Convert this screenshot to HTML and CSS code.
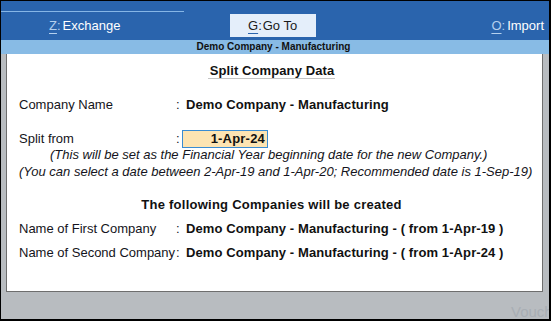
FILE: index.html
```html
<!DOCTYPE html>
<html>
<head>
<meta charset="utf-8">
<link rel="stylesheet" href="styles.css">
</head>
<body>
<div class="screen">
  <header class="topbar">
    <div class="topline"></div>
    <nav class="menu">
      <div class="menu-cell menu-left"><span class="key">Z</span><span class="colon">:</span><span class="label">Exchange</span></div>
      <div class="menu-cell menu-mid"><span class="btn"><span class="key-dark">G</span>:<span class="label-tight">Go To</span></span></div>
      <div class="menu-cell menu-right"><span class="key">O</span><span class="colon">:</span><span class="label">Import</span></div>
    </nav>
  </header>
  <div class="subheader">Demo Company - Manufacturing</div>
  <main class="workspace">
    <section class="dialog">
      <div class="title"><span class="title-text">Split Company Data</span></div>
      <div class="field row-company">
        <span class="f-label">Company Name</span>
        <span class="f-colon">:</span>
        <span class="f-value">Demo Company - Manufacturing</span>
      </div>
      <div class="field row-split">
        <span class="f-label">Split from</span>
        <span class="f-colon">:</span>
        <span class="date-input">1-Apr-24</span>
      </div>
      <div class="info">
        <p class="info-line info-indent">(This will be set as the Financial Year beginning date for the new Company.)</p>
        <p class="info-line">(You can select a date between 2-Apr-19 and 1-Apr-20; Recommended date is 1-Sep-19)</p>
      </div>
      <div class="section-head">The following Companies will be created</div>
      <div class="field row-first">
        <span class="f-label">Name of First Company</span>
        <span class="f-colon">:</span>
        <span class="f-value">Demo Company - Manufacturing - ( from 1-Apr-19 )</span>
      </div>
      <div class="field row-second">
        <span class="f-label">Name of Second Company</span>
        <span class="f-colon">:</span>
        <span class="f-value">Demo Company - Manufacturing - ( from 1-Apr-24 )</span>
      </div>
    </section>
    <span class="ghost">Vouch</span>
  </main>
</div>
</body>
</html>
```

FILE: styles.css
```css
* { box-sizing: border-box; }
html, body { margin: 0; padding: 0; }
body { background: #000; }

.screen {
  width: 551px;
  height: 321px;
  border-style: solid;
  border-color: #000;
  border-width: 1px 2px 2px 1px;
  background: #b8bcc0;
  display: flex;
  flex-direction: column;
  overflow: hidden;
  position: relative;
  font-family: "Liberation Sans", Arial, sans-serif;
  color: #141420;
}

.topbar {
  height: 39px;
  background: #2a64ad;
  display: flex;
  flex-direction: column;
}
.topline {
  width: 183px;
  height: 1px;
  margin-top: 10px;
  background: #86b6e6;
}
.menu {
  margin-top: 2px;
  height: 23px;
  display: grid;
  grid-template-columns: 182px 183px 1fr;
  font-size: 13px;
  line-height: 23px;
  color: #ffffff;
}
.menu-left { padding-left: 48px; }
.menu-mid { padding-left: 47px; }
.menu-right { text-align: right; padding-right: 5px; }
.key {
  color: #b4d0ee;
  text-decoration: underline;
  text-underline-offset: 3px;
}
.colon { color: #b4d0ee; }
.label { margin-left: 2px; }
.btn {
  display: inline-block;
  width: 86px;
  height: 23px;
  background: #e4eefa;
  color: #1a1a1a;
  padding-left: 18px;
}
.key-dark {
  text-decoration: underline;
  text-decoration-color: #2a64ad;
  text-underline-offset: 3px;
}
.label-tight { margin-left: 1px; }

.subheader {
  height: 14px;
  background: #88bbe5;
  font-size: 10px;
  font-weight: bold;
  line-height: 14px;
  text-align: center;
  padding-right: 3px;
  color: #111;
}

.workspace {
  flex: 1;
  padding-left: 5px;
  position: relative;
}
.dialog {
  width: 537px;
  height: 238px;
  background: #ffffff;
  border: 1px solid #6e6e6e;
  border-top: none;
  padding: 9px 18px 0 12px;
  font-size: 13px;
}

.title {
  text-align: center;
  line-height: 15px;
  font-weight: bold;
  letter-spacing: 0.1px;
  color: #111;
}
.title-text {
  display: inline-block;
  padding: 0 1px 0 2px;
  border-bottom: 1px solid #c4c4c4;
}

.field {
  display: grid;
  grid-template-columns: 157px 6px auto;
  line-height: 16px;
  align-items: center;
}
.row-company { margin-top: 18px; }
.f-label { white-space: nowrap; }
.f-value {
  font-weight: bold;
  letter-spacing: 0.1px;
  color: #111;
  padding-left: 4px;
  white-space: nowrap;
}
.row-split { margin-top: 17px; height: 18px; }
.row-first { margin-top: 8px; }
.row-second { margin-top: 8px; }

.date-input {
  width: 86px;
  height: 18px;
  background: #fde4b2;
  border: 1px solid #3a8cd2;
  font-weight: bold;
  letter-spacing: 0.2px;
  color: #111;
  text-align: right;
  padding-right: 2px;
  line-height: 16px;
}

.info { margin-top: -1px; }
.info-line {
  margin: 0;
  font-style: italic;
  line-height: 16.5px;
  white-space: nowrap;
}
.info-indent { padding-left: 31px; }

.section-head {
  margin-top: 17px;
  text-align: center;
  font-weight: bold;
  letter-spacing: 0.25px;
  line-height: 16px;
  color: #111;
}

.ghost {
  position: absolute;
  left: 510px;
  top: 249px;
  font-size: 15px;
  color: #a8aeb4;
}
```
